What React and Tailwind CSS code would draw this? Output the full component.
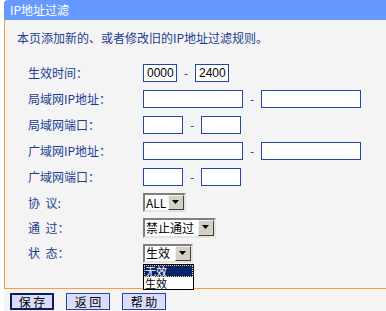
import React from 'react';

const Field = ({ w, value }) => (
  <div className={`${w} h-[18px] bg-white border border-[#2146ab] flex items-center pl-[3px] text-[12px] text-black font-['Liberation_Sans',sans-serif]`}>
    {value}
  </div>
);

const Dash = () => (
  <span className="w-[18px] text-center text-[#1c3d94] leading-none">-</span>
);

const Select = ({ w, h, value }) => (
  <div className={`${w} ${h} flex bg-white border-2 border-t-[#7f7f7f] border-l-[#7f7f7f] border-b-[#e4e2dc] border-r-[#e4e2dc]`}>
    <div className="flex-1 flex items-center pl-[1px] text-[12px] text-black leading-none">{value}</div>
    <div className="w-[16px] bg-[#d4d0c8] border border-t-[#f2f1ee] border-l-[#f2f1ee] border-b-[#404040] border-r-[#404040] flex items-center justify-center">
      <svg width="8" height="5" viewBox="0 0 8 5">
        <polygon points="0,0 7,0 3.5,4" fill="#000" />
      </svg>
    </div>
  </div>
);

const Row = ({ label, h = 'h-[26px]', children }) => (
  <div className={`flex items-center ${h}`}>
    <div className="w-[138px] pl-[23px] text-[#1c3d94] whitespace-pre">{label}</div>
    <div className="flex items-center">{children}</div>
  </div>
);

const Btn = ({ label, active }) => (
  <div
    className={
      active
        ? 'w-[44px] h-[17px] bg-[#dcdcfa] border-2 border-[#0c1f5c] flex items-center justify-center text-black whitespace-pre leading-none'
        : 'w-[44px] h-[17px] bg-[#dcdcfa] border border-[#2146ab] flex items-center justify-center text-black whitespace-pre leading-none'
    }
  >
    {label}
  </div>
);

export default function App() {
  return (
    <div className="w-[386px] h-[311px] bg-white overflow-hidden font-['Noto_Sans_CJK_SC','Liberation_Serif',sans-serif] text-[12px] leading-[14px]">
      <div className="ml-[4px]">
        <div className="h-[20px] bg-[#6699ff] rounded-tl-[4px] flex items-center pl-[6px] text-white">IP地址过滤</div>
        <div className="h-[269px] bg-[#f4f4f4] border-l border-b border-[#ff9c33]">
          <div className="pt-[11px] pl-[12px] text-[#1c3d94]">本页添加新的、或者修改旧的IP地址过滤规则。</div>
          <div className="mt-[15px]">
            <Row label="生效时间：">
              <Field w="w-[34px]" value="0000" />
              <Dash />
              <Field w="w-[34px]" value="2400" />
            </Row>
            <Row label="局域网IP地址：">
              <Field w="w-[100px]" />
              <Dash />
              <Field w="w-[100px]" />
            </Row>
            <Row label="局域网端口：">
              <Field w="w-[40px]" />
              <Dash />
              <Field w="w-[40px]" />
            </Row>
            <Row label="广域网IP地址：">
              <Field w="w-[100px]" />
              <Dash />
              <Field w="w-[100px]" />
            </Row>
            <Row label="广域网端口：">
              <Field w="w-[40px]" />
              <Dash />
              <Field w="w-[40px]" />
            </Row>
            <Row label="协  议:" h="h-[25px]">
              <Select w="w-[43px]" h="h-[19px]" value="ALL" />
            </Row>
            <Row label="通  过：" h="h-[25px]">
              <Select w="w-[73px]" h="h-[20px]" value="禁止通过" />
            </Row>
            <Row label="状  态：">
              <div className="relative">
                <Select w="w-[50px]" h="h-[19px]" value="生效" />
                <div className="absolute left-0 top-[20px] w-[51px] bg-white border border-black z-10">
                  <div className="h-[12px] bg-[#0a246a] text-white text-[11px] leading-[12px] outline-1 outline-dotted outline-[#e8d870] -outline-offset-1 pl-[1px]">无效</div>
                  <div className="h-[12px] text-black text-[11px] leading-[12px] pl-[1px]">生效</div>
                </div>
              </div>
            </Row>
          </div>
        </div>
        <div className="flex gap-[12px] pl-[6px] pt-[4px] bg-[#f4f4f4] h-[22px]">
          <Btn label="保 存" active />
          <Btn label="返 回" />
          <Btn label="帮 助" />
        </div>
      </div>
    </div>
  );
}
